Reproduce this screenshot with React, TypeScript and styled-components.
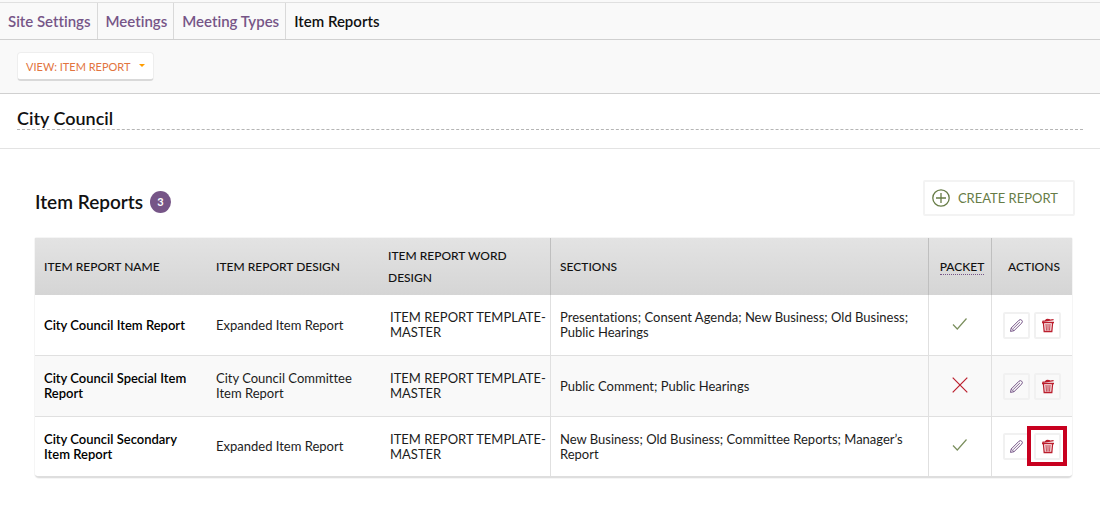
import React from 'react';
import styled, { createGlobalStyle } from 'styled-components';

const GlobalStyle = createGlobalStyle`
  *, *::before, *::after { box-sizing: border-box; }
  body {
    margin: 0;
    background: #fff;
    color: #111;
    font-family: Lato, "Liberation Sans", sans-serif;
    font-size: 13px;
    line-height: 15px;
    font-variant-ligatures: none;
  }
  h1, h2 { margin: 0; font-weight: 600; }
  button, a { font-family: inherit; }
`;

const TopBar = styled.header`
  padding-top: 2px;
  background: #f9f9f9;
  border-bottom: 1px solid #d0d0d0;
`;

const Breadcrumbs = styled.nav`
  display: flex;
  height: 38px;
  border-top: 1px solid #e0e0e0;
  border-bottom: 1px solid #d0d0d0;
`;

const Crumb = styled.a<{ $current?: boolean }>`
  display: flex;
  align-items: center;
  padding: 0 6px 0 8px;
  border-right: 1px solid ${(p) => (p.$current ? 'transparent' : '#d9d9d9')};
  color: ${(p) => (p.$current ? '#111' : '#765587')};
  font-size: 15px;
  font-weight: 600;
  text-decoration: none;
`;

const Toolbar = styled.div`
  padding: 12px 16px 12px 17px;
`;

const ViewButton = styled.button`
  display: inline-flex;
  align-items: center;
  gap: 9px;
  height: 29px;
  padding: 0 8px;
  border: 1px solid #eee;
  border-bottom: 2px solid #d9d9d9;
  border-radius: 4px;
  background: #fff;
  color: #e27440;
  font-size: 11px;
  font-weight: 400;
`;

const Caret = styled.span`
  margin-bottom: 2px;
  border: 3px solid transparent;
  border-top-color: #ff9d00;
  border-bottom: 0;
`;

const TitleBand = styled.div`
  padding: 13px 17px 18px;
  border-bottom: 1px solid #e3e3e3;
`;

const PageTitle = styled.h1`
  border-bottom: 1px dashed #b5b5b5;
  font-size: 18px;
  line-height: 22px;
`;

const Content = styled.main`
  padding: 31px 25px 24px 35px;
`;

const SectionHeader = styled.div`
  display: flex;
  align-items: center;
  justify-content: space-between;
  margin-bottom: 22px;
`;

const SectionTitle = styled.h2`
  display: flex;
  align-items: center;
  gap: 7px;
  padding-top: 8px;
  font-size: 19px;
  line-height: 22px;
`;

const CountBadge = styled.span`
  width: 21px;
  height: 22px;
  border-radius: 50%;
  background: #765587;
  color: #fff;
  font-size: 11px;
  font-weight: 700;
  text-align: center;
`;

const CreateButton = styled.button`
  display: flex;
  align-items: center;
  gap: 8px;
  height: 36px;
  padding: 0 15px 0 7px;
  border: 2px solid #f3f3f3;
  border-radius: 2px;
  background: #fff;
  color: #677c46;
  font-size: 13px;
  font-weight: 400;
`;

const TableCard = styled.div`
  margin-right: 3px;
  border-bottom: 2px solid #dedede;
  border-radius: 2px 2px 4px 4px;
  box-shadow: 0 0 0 1px #f5f5f5;
`;

const Table = styled.table`
  width: 100%;
  border-collapse: separate;
  border-spacing: 0;
  table-layout: fixed;
`;

const Column = styled.col<{ $width?: number }>`
  width: ${(p) => (p.$width ? `${p.$width}px` : 'auto')};
`;

const HeadRow = styled.tr`
  height: 57px;
  background: linear-gradient(#e3e3e3, #d5d5d5);
`;

const HeadCell = styled.th<{ $divided?: boolean; $centered?: boolean }>`
  padding: ${(p) => (p.$centered ? '0 6px 0 10px' : '0 9px')};
  border-right: ${(p) => (p.$divided ? '1px solid #bfbfbf' : '0')};
  font-size: 12px;
  font-weight: 500;
  line-height: 22px;
  text-align: ${(p) => (p.$centered ? 'center' : 'left')};
`;

const Hint = styled.abbr`
  border-bottom: 1px dotted #765587;
  text-decoration: none;
`;

const Row = styled.tr`
  height: 61px;
  &:nth-child(even) { background: #f9f9f9; }
  &:last-child { height: 59px; }
  &:last-child td { border-bottom: 0; }
`;

const Cell = styled.td<{ $divided?: boolean; $strong?: boolean }>`
  padding: 0 9px;
  border-right: ${(p) => (p.$divided ? '1px solid #e0e0e0' : '0')};
  border-bottom: 1px solid #e0e0e0;
  color: ${(p) => (p.$strong ? '#000' : '#1c1c1c')};
  font-weight: ${(p) => (p.$strong ? 600 : 400)};
`;

const TemplateCell = styled(Cell)`
  padding: 0 0 0 11px;
`;

const StatusCell = styled(Cell)`
  padding-bottom: 3px;
`;

const StatusIcon = styled.svg`
  display: block;
  margin: 0 auto;
  fill: none;
`;

const Actions = styled.div`
  display: flex;
  justify-content: center;
  gap: 4px;
`;

const ActionButton = styled.button<{ $highlighted?: boolean }>`
  position: relative;
  display: grid;
  place-items: center;
  width: 27px;
  height: 27px;
  padding: 0;
  border: 2px solid #f1f1f1;
  border-radius: 2px;
  background: transparent;

  &::after {
    content: '';
    display: ${(p) => (p.$highlighted ? 'block' : 'none')};
    position: absolute;
    inset: -9px -8px -8px -9px;
    border: 4px solid #c8001f;
  }
`;

const PlusCircle = () => (
  <svg width="18" height="18" viewBox="0 0 18 18" fill="none" stroke="#677c46" aria-hidden="true">
    <circle cx="9" cy="9" r="8.2" strokeWidth="1.3" />
    <path d="M9 4v10M4 9h10" strokeWidth="1.3" />
  </svg>
);

const Pencil = () => (
  <svg width="15" height="15" viewBox="0 0 15 15" fill="none" stroke="#765587" strokeLinejoin="round" aria-hidden="true">
    <path d="M1.5 13.4 2.2 10 10 2.2q1.4-1.1 2.7 0t.2 2.7L5 12.7z" />
    <path d="M2.2 10 5 12.7M4.2 10.6 10.9 4" strokeWidth=".9" />
  </svg>
);

const Trash = () => (
  <svg width="14" height="15" viewBox="0 0 14 15" fill="none" stroke="#bb1e2d" aria-hidden="true">
    <path d="M1 4.5h12M2.4 4.5l.8 9h7.6l.8-9" strokeWidth="1.3" />
    <path d="M5 6l.3 6.5M7 6v6.5M9 6l-.3 6.5" />
    <path d="M1.3 3.3 12.6 1.7M4.3 2.6q2-2.2 4.5-.6" strokeWidth="1.2" />
  </svg>
);

const Check = () => (
  <StatusIcon width="16" height="14" viewBox="0 0 16 14" stroke="#7b8f5e" strokeWidth="1.2" role="img" aria-label="Yes">
    <path d="M1 7.5 5.3 12 14.5 1.5" />
  </StatusIcon>
);

const Cross = () => (
  <StatusIcon width="16" height="16" viewBox="0 0 16 16" stroke="#bb1e2d" strokeWidth="1.2" role="img" aria-label="No">
    <path d="M.7.7l14.6 14.6M15.3.7.7 15.3" />
  </StatusIcon>
);

interface Report {
  name: string;
  design: string;
  template: string;
  sections: string;
  inPacket: boolean;
  highlighted?: boolean;
}

const crumbs = ['Site Settings', 'Meetings', 'Meeting Types', 'Item Reports'];

const reports: Report[] = [
  {
    name: 'City Council Item Report',
    design: 'Expanded Item Report',
    template: 'ITEM REPORT TEMPLATE-MASTER',
    sections: 'Presentations; Consent Agenda; New Business; Old Business; Public Hearings',
    inPacket: true,
  },
  {
    name: 'City Council Special Item Report',
    design: 'City Council Committee Item Report',
    template: 'ITEM REPORT TEMPLATE-MASTER',
    sections: 'Public Comment; Public Hearings',
    inPacket: false,
  },
  {
    name: 'City Council Secondary Item Report',
    design: 'Expanded Item Report',
    template: 'ITEM REPORT TEMPLATE-MASTER',
    sections: 'New Business; Old Business; Committee Reports; Manager’s Report',
    inPacket: true,
    highlighted: true,
  },
];

export default function App() {
  return (
    <>
      <GlobalStyle />
      <TopBar>
        <Breadcrumbs aria-label="Breadcrumb">
          {crumbs.map((label, i) => (
            <Crumb key={label} href="#" $current={i === crumbs.length - 1}>
              {label}
            </Crumb>
          ))}
        </Breadcrumbs>
        <Toolbar>
          <ViewButton type="button">
            VIEW: ITEM REPORT
            <Caret />
          </ViewButton>
        </Toolbar>
      </TopBar>
      <TitleBand>
        <PageTitle>City Council</PageTitle>
      </TitleBand>
      <Content>
        <SectionHeader>
          <SectionTitle>
            Item Reports <CountBadge>3</CountBadge>
          </SectionTitle>
          <CreateButton type="button">
            <PlusCircle />
            CREATE REPORT
          </CreateButton>
        </SectionHeader>
        <TableCard>
          <Table>
            <colgroup>
              <Column $width={172} />
              <Column $width={172} />
              <Column $width={172} />
              <Column />
              <Column $width={63} />
              <Column $width={80} />
            </colgroup>
            <thead>
              <HeadRow>
                <HeadCell>ITEM REPORT NAME</HeadCell>
                <HeadCell>ITEM REPORT DESIGN</HeadCell>
                <HeadCell $divided>ITEM REPORT WORD DESIGN</HeadCell>
                <HeadCell $divided>SECTIONS</HeadCell>
                <HeadCell $divided $centered>
                  <Hint>PACKET</Hint>
                </HeadCell>
                <HeadCell $centered>ACTIONS</HeadCell>
              </HeadRow>
            </thead>
            <tbody>
              {reports.map((r) => (
                <Row key={r.name}>
                  <Cell $strong>{r.name}</Cell>
                  <Cell>{r.design}</Cell>
                  <TemplateCell $divided>{r.template}</TemplateCell>
                  <Cell $divided>{r.sections}</Cell>
                  <StatusCell $divided>{r.inPacket ? <Check /> : <Cross />}</StatusCell>
                  <Cell>
                    <Actions>
                      <ActionButton type="button" aria-label={`Edit ${r.name}`}>
                        <Pencil />
                      </ActionButton>
                      <ActionButton type="button" aria-label={`Delete ${r.name}`} $highlighted={r.highlighted}>
                        <Trash />
                      </ActionButton>
                    </Actions>
                  </Cell>
                </Row>
              ))}
            </tbody>
          </Table>
        </TableCard>
      </Content>
    </>
  );
}
